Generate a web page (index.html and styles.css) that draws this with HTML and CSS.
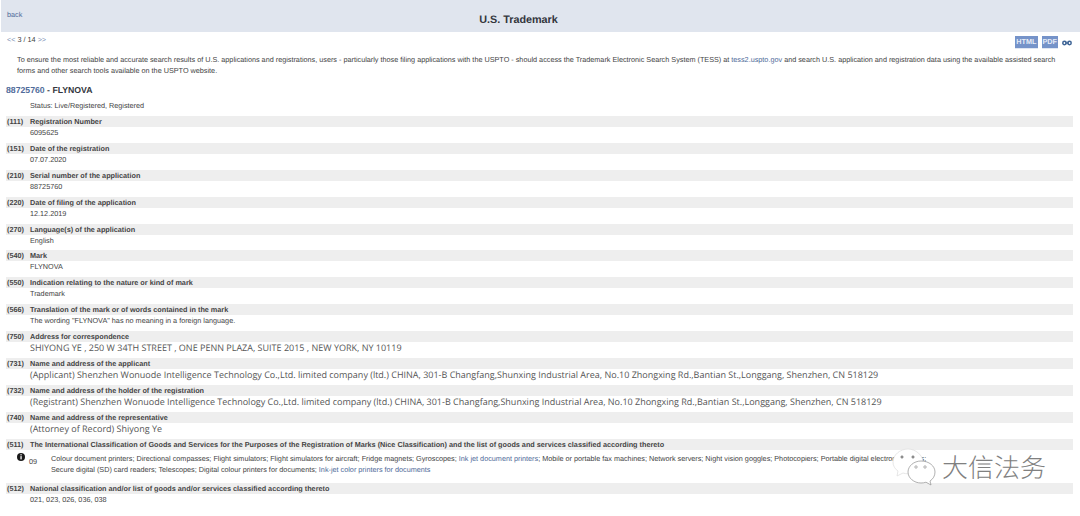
FILE: index.html
```html
<!DOCTYPE html>
<html lang="en">
<head>
    <meta charset="UTF-8">
    <title>U.S. Trademark</title>
    <link rel="stylesheet" href="styles.css">
</head>
<body>
    <header class="topbar">
        <a href="#" class="back">back</a>
        <h1>U.S. Trademark</h1>
    </header>
    <div class="pager-row">
        <div class="pager"><a href="#">&lt;&lt;</a> 3 / 14 <a href="#">&gt;&gt;</a></div>
        <div class="tools">
            <a href="#" class="tool">HTML</a>
            <a href="#" class="tool">PDF</a>
            <svg class="link-icon" width="10" height="6" viewBox="0 0 10 6">
                <circle cx="2.5" cy="3" r="1.700" fill="none" stroke="#3f6596" stroke-width="1.500"/>
                <circle cx="7.5" cy="3" r="1.700" fill="none" stroke="#3f6596" stroke-width="1.500"/>
                <path d="M3 3h4" stroke="#3f6596" stroke-width="1.300"/>
            </svg>
        </div>
    </div>
    <p class="notice">To ensure the most reliable and accurate search results of U.S. applications and registrations, users - particularly those filing applications with the USPTO - should access the Trademark Electronic Search System (TESS) at <a href="#">tess2.uspto.gov</a> and search U.S. application and registration data using the available assisted search forms and other search tools available on the USPTO website.</p>
    <h2 class="mark-title"><a href="#">88725760</a> - FLYNOVA</h2>
    <div class="status">Status: Live/Registered, Registered</div>

    <section class="field">
        <div class="field-head"><span class="code">(111)</span>Registration Number</div>
        <div class="field-value">6095625</div>
    </section>
    <section class="field">
        <div class="field-head"><span class="code">(151)</span>Date of the registration</div>
        <div class="field-value">07.07.2020</div>
    </section>
    <section class="field">
        <div class="field-head"><span class="code">(210)</span>Serial number of the application</div>
        <div class="field-value">88725760</div>
    </section>
    <section class="field">
        <div class="field-head"><span class="code">(220)</span>Date of filing of the application</div>
        <div class="field-value">12.12.2019</div>
    </section>
    <section class="field">
        <div class="field-head"><span class="code">(270)</span>Language(s) of the application</div>
        <div class="field-value">English</div>
    </section>
    <section class="field">
        <div class="field-head"><span class="code">(540)</span>Mark</div>
        <div class="field-value">FLYNOVA</div>
    </section>
    <section class="field">
        <div class="field-head"><span class="code">(550)</span>Indication relating to the nature or kind of mark</div>
        <div class="field-value">Trademark</div>
    </section>
    <section class="field">
        <div class="field-head"><span class="code">(566)</span>Translation of the mark or of words contained in the mark</div>
        <div class="field-value">The wording "FLYNOVA" has no meaning in a foreign language.</div>
    </section>
    <section class="field">
        <div class="field-head"><span class="code">(750)</span>Address for correspondence</div>
        <div class="field-value large">SHIYONG YE , 250 W 34TH STREET , ONE PENN PLAZA, SUITE 2015 , NEW YORK, NY 10119</div>
    </section>
    <section class="field">
        <div class="field-head"><span class="code">(731)</span>Name and address of the applicant</div>
        <div class="field-value large">(Applicant) Shenzhen Wonuode Intelligence Technology Co.,Ltd. limited company (ltd.) CHINA, 301-B Changfang,Shunxing Industrial Area, No.10 Zhongxing Rd.,Bantian St.,Longgang, Shenzhen, CN 518129</div>
    </section>
    <section class="field">
        <div class="field-head"><span class="code">(732)</span>Name and address of the holder of the registration</div>
        <div class="field-value large">(Registrant) Shenzhen Wonuode Intelligence Technology Co.,Ltd. limited company (ltd.) CHINA, 301-B Changfang,Shunxing Industrial Area, No.10 Zhongxing Rd.,Bantian St.,Longgang, Shenzhen, CN 518129</div>
    </section>
    <section class="field">
        <div class="field-head"><span class="code">(740)</span>Name and address of the representative</div>
        <div class="field-value large">(Attorney of Record) Shiyong Ye</div>
    </section>
    <section class="field goods">
        <div class="field-head"><span class="code">(511)</span>The International Classification of Goods and Services for the Purposes of the Registration of Marks (Nice Classification) and the list of goods and services classified according thereto</div>
        <div class="class-row">
            <svg class="info-icon" width="8" height="8" viewBox="0 0 8 8">
                <circle cx="4" cy="4" r="4" fill="#1a1a1a"/>
                <rect x="3.4" y="1.2" width="1.3" height="1.2" fill="#fff"/>
                <rect x="3.4" y="3.1" width="1.3" height="3.3" fill="#fff"/>
            </svg>
            <span class="class-no">09</span>
            <div class="class-goods">Colour document printers; Directional compasses; Flight simulators; Flight simulators for aircraft; Fridge magnets; Gyroscopes; <a href="#">Ink jet document printers</a>; Mobile or portable fax machines; Network servers; Night vision goggles; Photocopiers; Portable digital electronic scales;<br>Secure digital (SD) card readers; Telescopes; Digital colour printers for documents; <a href="#">Ink-jet color printers for documents</a></div>
        </div>
    </section>
    <section class="field">
        <div class="field-head"><span class="code">(512)</span>National classification and/or list of goods and/or services classified according thereto</div>
        <div class="field-value">021, 023, 026, 036, 038</div>
    </section>

    <div class="watermark">
        <svg width="44" height="38" viewBox="0 0 44 38" fill="#fff" stroke="#8f8f8f" stroke-width="0.7">
            <path d="M16 1C8 1 1 7 1 14c0 4 2 7 5 9l-1 5 6-3c2 .6 3 .8 5 .8 8 0 15-6 15-12S24 1 16 1z" stroke="#ddd"/>
            <path d="M29 13c-7 0-13 5-13 11s6 11 13 11c2 0 3-.2 5-.8l5 2.800-1-4c3-2 5-5 5-9 0-6-6-11-14-11z"/>
            <circle cx="24" cy="19" r="1.200"/>
            <circle cx="33" cy="19" r="1.200"/>
            <circle cx="10" cy="9" r="1.200" fill="#888"/>
            <circle cx="21" cy="9" r="1.200" fill="#888"/>
        </svg>
        <span class="watermark-text">大信法务</span>
    </div>
</body>
</html>
```

FILE: styles.css
```css
body {
    margin: 0;
    font-family: "Liberation Sans", Arial, sans-serif;
    font-size: 7.250px;
    color: #444;
    background-color: #fff;
    height: 516px;
    overflow: hidden;
    position: relative;
    text-rendering: geometricPrecision;
}
a {
    color: #4f6b9a;
    text-decoration: none;
}
.topbar {
    display: flex;
    justify-content: center;
    align-items: center;
    position: relative;
    height: 32px;
    margin-left: 1px;
    padding-right: 44px;
    background-color: #e0e5ee;
}
.topbar h1 {
    margin: 7px 0 0;
    font-size: 10.800px;
    font-weight: bold;
    color: #33363d;
}
.back {
    position: absolute;
    left: 6px;
    top: 10px;
}
.pager-row {
    display: flex;
    justify-content: space-between;
    align-items: flex-start;
    height: 17px;
    padding: 3px 8px 0 7px;
}
.pager a {
    color: #7c8fb4;
}
.tools {
    display: flex;
    align-items: center;
    gap: 4px;
    margin-top: 1px;
}
.tool {
    background-color: #7593c9;
    color: #e6ecf7;
    font-weight: bold;
    padding: 2px 1px;
    line-height: 8px;
    border-bottom: 1px solid #dfe6f3;
}
.notice {
    margin: 2px 22px 0 17px;
    line-height: 11px;
}
.mark-title {
    margin: 9px 0 0 6px;
    font-size: 8.700px;
    line-height: 11px;
    color: #33363d;
}
.mark-title a {
    color: #4f6b9a;
}
.status {
    margin: 4px 0 0 30px;
    line-height: 11px;
}
.field {
    margin: 4.920px 7px 0 6px;
    height: 22px;
}
.field-head {
    background-color: #eeeeee;
    height: 11px;
    line-height: 11px;
    font-weight: bold;
    display: flex;
    white-space: nowrap;
}
.code {
    width: 24px;
    padding-left: 1px;
    box-sizing: border-box;
    flex: none;
}
.field-value {
    padding-left: 24px;
    line-height: 11px;
    white-space: nowrap;
}
.field-value.large {
    font-family: "Open Sans", sans-serif;
    font-size: 9px;
    line-height: 12px;
    color: #555;
}
.goods {
    height: 39px;
}
.class-row {
    display: flex;
    align-items: flex-start;
    padding-top: 3px;
}
.info-icon {
    flex: none;
    margin-left: 11px;
}
.class-no {
    flex: none;
    width: 22px;
    margin: 4px 0 0 4px;
    color: #444;
}
.class-goods {
    line-height: 11px;
    white-space: nowrap;
}
.watermark {
    position: absolute;
    left: 892px;
    top: 448px;
    display: flex;
    align-items: center;
    gap: 6px;
}
.watermark-text {
    font-family: "Noto Sans CJK SC", sans-serif;
    font-weight: 300;
    font-size: 26px;
    color: #808080;
    line-height: 30px;
}
```
